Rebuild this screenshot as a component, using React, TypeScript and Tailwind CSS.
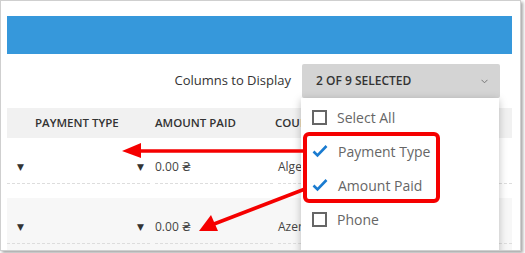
import React from "react";

const font = { fontFamily: '"Open Sans", "DejaVu Sans", sans-serif' };

function Checkbox() {
  return <span className="block h-[15px] w-[15px] border-2 border-[#666] bg-white" />;
}

function Check() {
  return (
    <svg width="16" height="14" viewBox="0 0 16 14" className="block">
      <path d="M1.5 7.5 L5.5 11.5 L14.5 2" fill="none" stroke="#1a7bd0" strokeWidth="2.6" />
    </svg>
  );
}

function MenuItem({ label, checked }: { label: string; checked?: boolean }) {
  return (
    <div className="flex h-[34px] items-center gap-[10px] pl-[11px] text-[14px] text-[#666]">
      {checked ? <Check /> : <Checkbox />}
      <span>{label}</span>
    </div>
  );
}

function Row({ country, shaded }: { country: string; shaded?: boolean }) {
  return (
    <div className={`h-[60px] shrink-0 ${shaded ? "bg-[#f7f7f7]" : "bg-white"}`}>
      <div className="flex h-[46px] items-end text-[12px] text-[#444]">
        <div className="flex h-[34px] w-[143px] items-center justify-between border-b border-dashed border-[#ddd] pl-[10px] pr-[6px] text-[9px] text-[#333]">
          <span>▼</span>
          <span>▼</span>
        </div>
        <div className="ml-[5px] flex h-[34px] w-[118px] items-center border-b border-dashed border-[#ddd]">
          0.00 ₴
        </div>
        <div className="ml-[5px] flex h-[34px] flex-1 items-center border-b border-dashed border-[#ddd]">
          {country}
        </div>
      </div>
    </div>
  );
}

export default function App() {
  return (
    <div className="h-[253px] w-[525px] overflow-hidden bg-white" style={font}>
      <div className="relative h-[251px] w-[521px] overflow-hidden border border-[#cfcfcf] bg-white pl-[6px] pr-[8px] pt-[15px] shadow-[2px_2px_3px_rgba(0,0,0,0.35)]">
        {/* header bar */}
        <div className="h-[38px] bg-[#3698db]" />

        {/* toolbar */}
        <div className="mt-[10px] flex h-[34px] items-center justify-end gap-[11px] pr-[12px]">
          <span className="text-[13px] text-[#333]">Columns to Display</span>
          <div className="flex h-[34px] w-[198px] items-center justify-between rounded-[2px] bg-[#d4d4d4] pl-[14px] pr-[12px] text-[12px] font-semibold text-[#333]">
            <span>2 OF 9 SELECTED</span>
            <svg width="7" height="5" viewBox="0 0 7 5">
              <path d="M0.5 0.8 L3.5 3.8 L6.5 0.8" fill="none" stroke="#777" strokeWidth="1" />
            </svg>
          </div>
        </div>

        {/* table */}
        <div className="mt-[10px] flex flex-col">
          <div className="flex h-[30px] shrink-0 items-center bg-[#f1f1f1] text-[11.5px] font-semibold text-[#333]">
            <span className="w-[148px] pl-[28px]">PAYMENT TYPE</span>
            <span className="w-[120px]">AMOUNT PAID</span>
            <span>COUNTRY</span>
          </div>
          <Row country="Algeria" />
          <Row country="Azerbaijan" shaded />
        </div>

        {/* dropdown menu */}
        <div className="absolute left-[300px] top-[97px] h-[170px] w-[198px] bg-white pt-[2px] shadow-[0_2px_8px_rgba(0,0,0,0.25)]">
          <MenuItem label="Select All" />
          <MenuItem label="Payment Type" checked />
          <MenuItem label="Amount Paid" checked />
          <MenuItem label="Phone" />
        </div>

        {/* annotation box */}
        <div className="absolute left-[302px] top-[131px] h-[71px] w-[137px] rounded-[6px] border-[4px] border-[#f50000]" />

        {/* annotation arrows */}
        <svg className="absolute left-[-1px] top-[-1px]" width="525" height="253" viewBox="0 0 525 253">
          <line x1="305" y1="151" x2="138" y2="151" stroke="#f50000" strokeWidth="3.5" />
          <polygon points="122,151 141,143 141,158" fill="#f50000" />
          <line x1="305" y1="189" x2="214" y2="224" stroke="#f50000" strokeWidth="3.5" />
          <polygon points="199,231 211,215 218,231" fill="#f50000" />
        </svg>
      </div>
    </div>
  );
}
